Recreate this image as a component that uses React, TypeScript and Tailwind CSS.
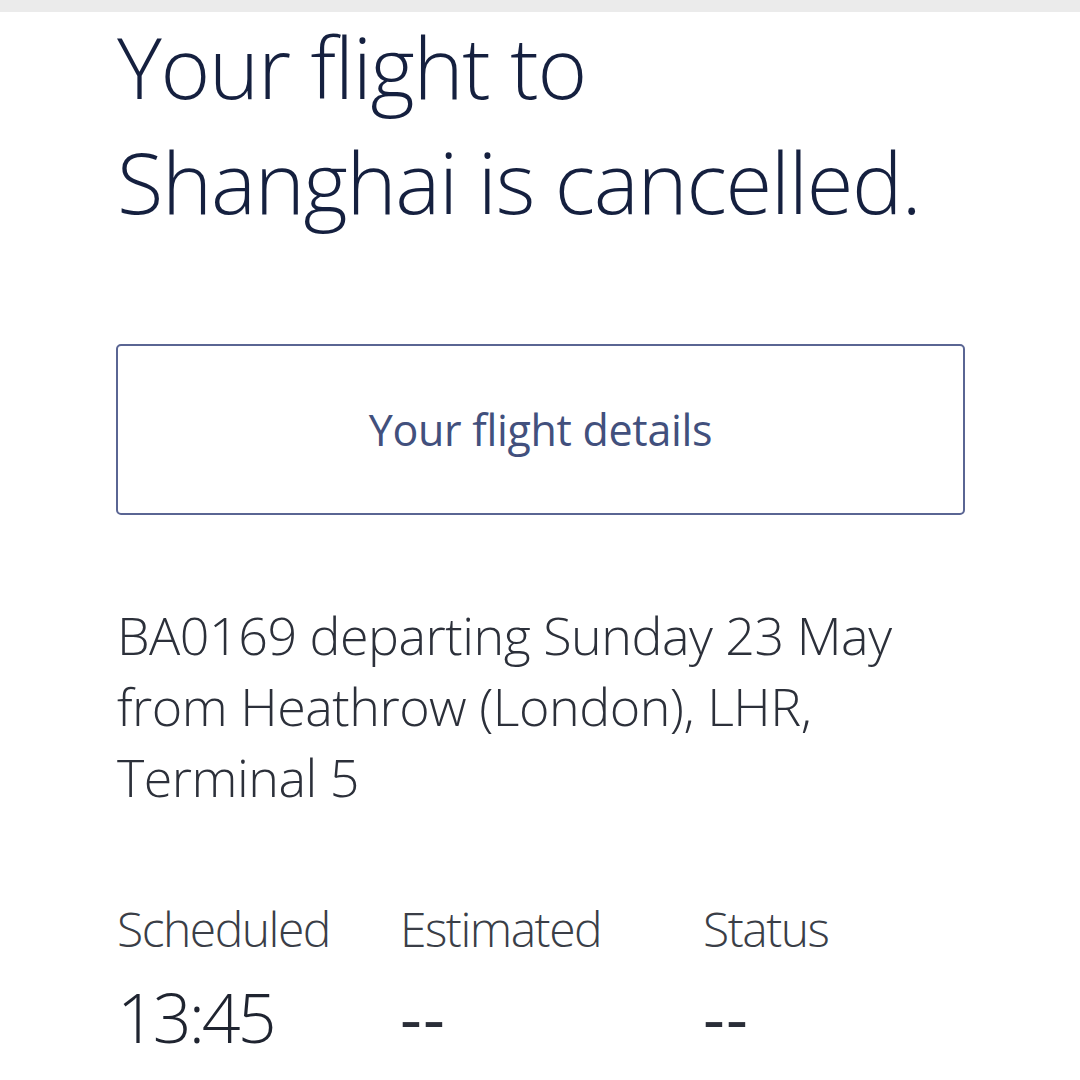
export default function App() {
  return (
    <div className="w-[1080px] h-[1080px] overflow-hidden bg-white" style={{ fontFamily: '"Open Sans", "Noto Sans", sans-serif' }}>
      <div className="h-3 bg-[#ebebeb]" />
      <div className="pl-[117px] pr-[115px]">
        <h1 className="text-[85px] leading-[115px] font-light text-[#15203f] tracking-[-1.3px] -mt-[3px]">
          Your flight to
          <br />
          Shanghai is cancelled.
        </h1>

        <div className="mt-[105px] -ml-px h-[171px] border-2 border-[#5a6593] rounded-[5px] flex items-center justify-center">
          <span className="text-[43px] text-[#42507d] font-normal tracking-[-0.3px] mt-px">Your flight details</span>
        </div>

        <p className="mt-[84px] text-[52px] leading-[71px] font-light text-[#2c303a] tracking-[-0.5px]">
          BA0169 departing Sunday 23 May
          <br />
          from Heathrow (London), LHR,
          <br />
          Terminal 5
        </p>

        <div className="mt-[89px] flex text-[#3a3e47]">
          <div className="w-[283px]">
            <div className="text-[48px] leading-[56px] font-light tracking-[-1.5px]">Scheduled</div>
            <div className="mt-[25px] text-[68px] leading-[70px] font-light tracking-[-3px] text-[#1f2430]">13:45</div>
          </div>
          <div className="w-[303px]">
            <div className="text-[48px] leading-[56px] font-light tracking-[-1.5px]">Estimated</div>
            <div className="mt-[25px] text-[68px] leading-[70px] font-normal tracking-[1px] text-[#2a2e38]">--</div>
          </div>
          <div>
            <div className="text-[48px] leading-[56px] font-light tracking-[-1.5px]">Status</div>
            <div className="mt-[25px] text-[68px] leading-[70px] font-normal tracking-[1px] text-[#2a2e38]">--</div>
          </div>
        </div>
      </div>
    </div>
  );
}
